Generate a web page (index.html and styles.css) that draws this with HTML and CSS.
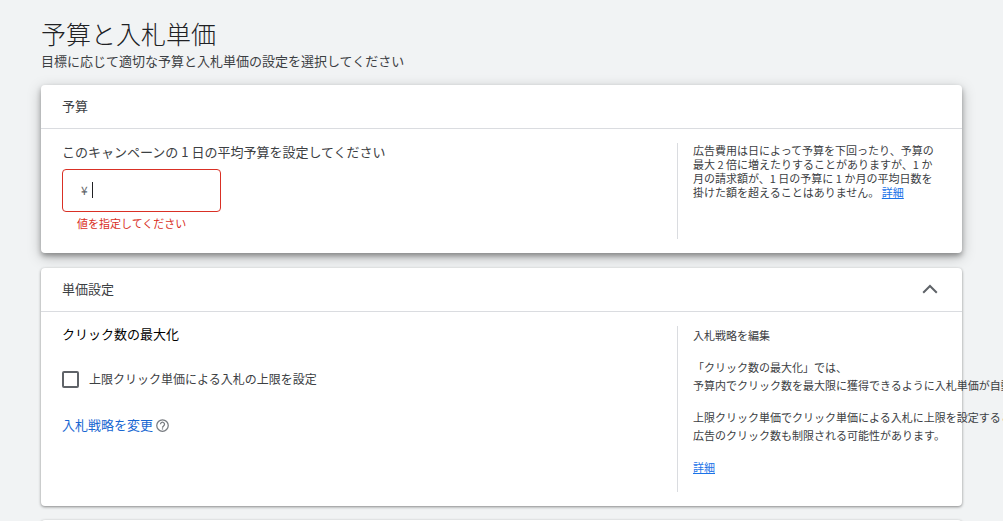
FILE: index.html
```html
<!DOCTYPE html>
<html lang="ja">
<head>
<meta charset="utf-8">
<meta name="viewport" content="width=device-width, initial-scale=1">
<title>予算と入札単価</title>
<link rel="stylesheet" href="styles.css">
</head>
<body>
<main class="page">
  <header class="page-header">
    <h1 class="title">予算と入札単価</h1>
    <p class="subtitle">目標に応じて適切な予算と入札単価の設定を選択してください</p>
  </header>

  <section class="card card-raised">
    <div class="card-header"><h2 class="card-title">予算</h2></div>
    <div class="card-body">
      <div class="card-main">
        <label class="field-label" for="budget">このキャンペーンの 1 日の平均予算を設定してください</label>
        <div class="money-field">
          <span class="currency">¥</span>
          <input class="money-input" id="budget" type="text" inputmode="numeric" aria-invalid="true" aria-describedby="budget-error">
        </div>
        <p class="error" id="budget-error">値を指定してください</p>
      </div>
      <aside class="card-side budget-side">
        <p class="help">広告費用は日によって予算を下回ったり、予算の最大 2 倍に増えたりすることがありますが、1 か月の請求額が、1 日の予算に 1 か月の平均日数を掛けた額を超えることはありません。 <a class="help-link" href="#">詳細</a></p>
      </aside>
    </div>
  </section>

  <section class="card">
    <div class="card-header">
      <h2 class="card-title">単価設定</h2>
      <button class="collapse" type="button" aria-label="折りたたむ" aria-expanded="true">
        <svg class="chevron" viewBox="0 0 16 10" aria-hidden="true"><path d="M1.2 8.800 8 2l6.800 6.800"/></svg>
      </button>
    </div>
    <div class="card-body">
      <div class="card-main">
        <h3 class="strategy">クリック数の最大化</h3>
        <label class="check-row">
          <input class="check" type="checkbox">
          <span>上限クリック単価による入札の上限を設定</span>
        </label>
        <div class="change-row">
          <a class="change-link" href="#">入札戦略を変更</a>
          <button class="help-button" type="button" aria-label="ヘルプ">
            <svg class="help-icon" viewBox="0 0 24 24" aria-hidden="true"><circle cx="12" cy="12" r="9.200"/><path d="M8.800 10a3.200 3.200 0 1 1 5.200 2.500c-1.200 1-2 1.500-2 3"/><path d="M12 16.500v2"/></svg>
          </button>
        </div>
      </div>
      <aside class="card-side strategy-side">
        <p>入札戦略を編集</p>
        <p>「クリック数の最大化」では、<br>予算内でクリック数を最大限に獲得できるように入札単価が自動</p>
        <p>上限クリック単価でクリック単価による入札に上限を設定すると<br>広告のクリック数も制限される可能性があります。</p>
        <p><a class="help-link" href="#">詳細</a></p>
      </aside>
    </div>
  </section>

  <section class="card next-card"></section>
</main>
</body>
</html>
```
FILE: styles.css
```css
* {
  box-sizing: border-box;
}

html {
  overflow: hidden;
}

body {
  margin: 0;
  background: #f1f3f4;
  color: #3c4043;
  font-family: "Noto Sans CJK JP", sans-serif;
  font-size: 13px;
  line-height: 20px;
}

h1, h2, h3, p {
  margin: 0;
  font-weight: inherit;
}

.page {
  display: flex;
  flex-direction: column;
  gap: 14px;
  padding: 16px 41px 0;
}

.title {
  color: #202124;
  font-size: 25px;
  font-weight: 300;
  line-height: 35px;
}

.subtitle {
  margin-bottom: 0;
}

.card {
  background: #fff;
  border-radius: 4px;
  box-shadow: 0 1px 3px rgba(0, 0, 0, 0.45);
}

.card-raised {
  margin-bottom: 1px;
  box-shadow: 0 3px 5px rgba(0, 0, 0, 0.3), 0 4px 14px rgba(0, 0, 0, 0.25);
}

.card-header {
  display: flex;
  align-items: center;
  justify-content: space-between;
  min-height: 44px;
  padding: 0 24px 2px 21px;
  border-bottom: 1px solid #dadce0;
}

.card-title {
  font-size: 13px;
}

.card-body {
  display: flex;
  padding: 14px 0;
}

.card-main {
  flex: 1;
  min-width: 0;
  padding-left: 21px;
}

.card-side {
  flex: 0 0 285px;
  min-width: 0;
  padding: 0 24px 0 15px;
  border-left: 1px solid #dadce0;
  font-size: 11px;
}

.field-label {
  display: block;
  line-height: 18px;
}

.money-field {
  display: flex;
  align-items: center;
  gap: 4px;
  width: 159px;
  height: 43px;
  margin-top: 8px;
  padding: 0 16px 2px 18px;
  border: 1px solid #d93025;
  border-radius: 4px;
}

.currency {
  color: #5f6368;
  font-size: 12px;
}

.money-input {
  flex: 1;
  min-width: 0;
  height: 16px;
  padding: 0;
  border: 0;
  border-left: 1px solid #202124;
  border-radius: 0;
  outline: 0;
  background: none;
  color: #202124;
  font: inherit;
}

.error {
  margin-top: 1px;
  padding-left: 15px;
  color: #d93025;
  font-size: 11px;
}

.budget-side {
  min-height: 96px;
  line-height: 14px;
}

.help-link {
  color: #1a73e8;
  text-decoration: underline;
}

.collapse,
.help-button {
  display: flex;
  padding: 0;
  border: 0;
  background: none;
}

.chevron {
  width: 16px;
  height: 10px;
  fill: none;
  stroke: #5f6368;
  stroke-width: 2;
}

.strategy {
  color: #000;
  font-size: 13px;
  line-height: 16px;
}

.check-row {
  display: flex;
  align-items: center;
  gap: 10px;
  margin-top: 27px;
  font-size: 12px;
}

.check {
  appearance: none;
  width: 17px;
  height: 17px;
  margin: 0;
  border: 2px solid #5f6368;
  border-radius: 2px;
}

.change-row {
  display: flex;
  align-items: center;
  gap: 2px;
  margin-top: 26px;
}

.change-link {
  color: #1967d2;
  text-decoration: none;
}

.help-icon {
  width: 15px;
  height: 15px;
  fill: none;
  stroke: #777b80;
  stroke-width: 2;
}

.strategy-side {
  display: flex;
  flex-direction: column;
  gap: 14px;
  min-height: 166px;
  line-height: 18px;
  white-space: nowrap;
}

.next-card {
  min-height: 44px;
}
```
